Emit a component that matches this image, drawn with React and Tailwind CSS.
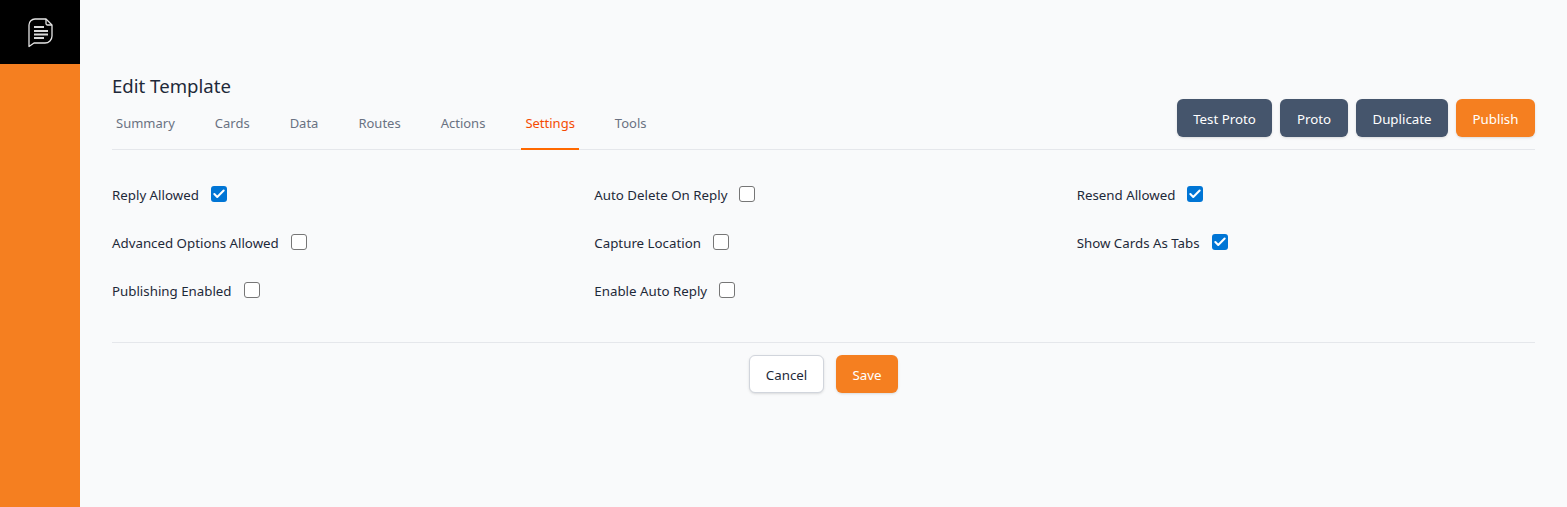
import { Check } from 'lucide-react';

const tabs = ['Summary', 'Cards', 'Data', 'Routes', 'Actions', 'Settings', 'Tools'];

const options = [
  { label: 'Reply Allowed', checked: true },
  { label: 'Auto Delete On Reply' },
  { label: 'Resend Allowed', checked: true },
  { label: 'Advanced Options Allowed' },
  { label: 'Capture Location' },
  { label: 'Show Cards As Tabs', checked: true },
  { label: 'Publishing Enabled' },
  { label: 'Enable Auto Reply' },
];

function Logo() {
  return (
    <svg width="25" height="30" viewBox="0 0 25 30" fill="none" stroke="#e5e5e5" strokeWidth="1.3" strokeLinejoin="round" className="mt-[1px] ml-[1px]">
      <path d="M1 28.5V7a6 6 0 0 1 6-6h11l6 6v11a7 7 0 0 1-7 7H6z" />
      <path d="M18 1v4.5a1.5 1.5 0 0 0 1.5 1.5H24" />
      <path d="M6 9h10M6 13h14M6 16.5h14M6 20h10" strokeWidth="2" stroke="#d9d9d9" />
    </svg>
  );
}

function Option({ label, checked }) {
  return (
    <label className="flex h-6 items-center gap-3 text-[13.3px] text-gray-800">
      <span className="pt-[2px]">{label}</span>
      {checked ? (
        <span className="mb-[2px] flex h-4 w-4 items-center justify-center rounded-[3px] bg-[#0075d5]">
          <Check className="h-[14px] w-[14px] text-white" strokeWidth={3.5} />
        </span>
      ) : (
        <span className="mb-[2px] h-4 w-4 rounded-[3px] border border-[#767676] bg-white" />
      )}
    </label>
  );
}

export default function App() {
  return (
    <div className="flex h-[507px] bg-gray-50 font-['Noto_Sans',sans-serif]">
      <aside className="w-20 shrink-0 bg-[#f57f20]">
        <div className="flex h-16 items-center justify-center bg-black">
          <Logo />
        </div>
      </aside>

      <main className="flex-1 px-8 pt-[72px]">
        <h1 className="h-[27px] text-[18.6px] leading-7 text-gray-800">Edit Template</h1>

        <div className="flex items-end justify-between border-b border-gray-200">
          <nav className="flex gap-8 text-[13px] text-gray-500">
            {tabs.map((tab) =>
              tab === 'Settings' ? (
                <a key={tab} className="-mb-px border-b-2 border-orange-500 px-1 pb-[15px] text-orange-600">
                  {tab}
                </a>
              ) : (
                <a key={tab} className="px-1 pb-[15px]">
                  {tab}
                </a>
              )
            )}
          </nav>
          <div className="mb-3 flex gap-2 text-[13.3px] text-white">
            <button className="h-[38px] w-[95px] rounded-md bg-slate-600 pt-[3px] shadow-sm">Test Proto</button>
            <button className="h-[38px] w-[68px] rounded-md bg-slate-600 pt-[3px] shadow-sm">Proto</button>
            <button className="h-[38px] w-[92px] rounded-md bg-slate-600 pt-[3px] shadow-sm">Duplicate</button>
            <button className="h-[38px] w-[79px] rounded-md bg-[#f57f20] pt-[3px] shadow-sm">Publish</button>
          </div>
        </div>

        <div className="mt-[33px] grid grid-cols-3 gap-x-6 gap-y-6 border-b border-gray-200 pb-[39px]">
          {options.map((o) => (
            <Option key={o.label} label={o.label} checked={o.checked} />
          ))}
        </div>

        <div className="mt-3 flex justify-center gap-3 text-[13.3px]">
          <button className="h-[38px] w-[75px] rounded-md border border-gray-300 bg-white pt-[3px] text-gray-800 shadow-sm">Cancel</button>
          <button className="h-[38px] w-[62px] rounded-md bg-[#f57f20] pt-[3px] text-white shadow-sm">Save</button>
        </div>
      </main>
    </div>
  );
}
